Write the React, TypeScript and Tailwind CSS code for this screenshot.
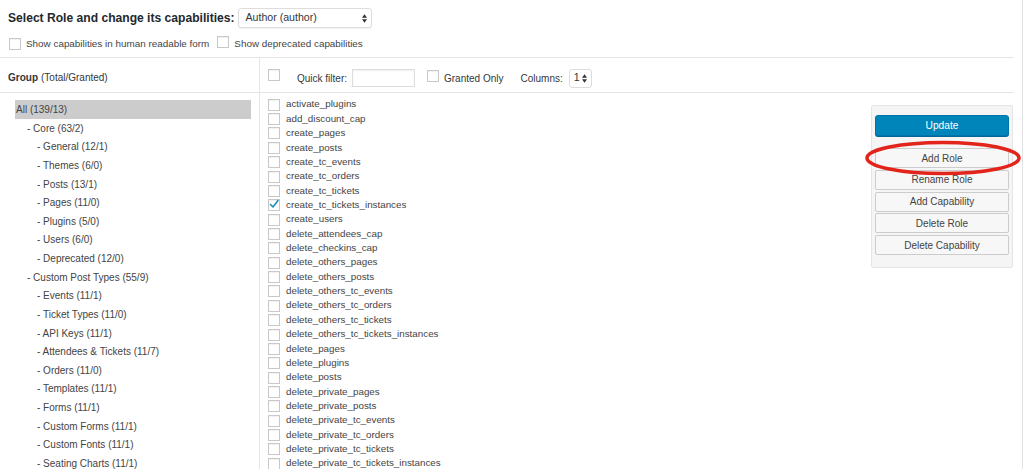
import React from 'react'

const GROUPS: { label: string; level: number; active?: boolean }[] = [
  { label: 'All (139/13)', level: 0, active: true },
  { label: '- Core (63/2)', level: 1 },
  { label: '- General (12/1)', level: 2 },
  { label: '- Themes (6/0)', level: 2 },
  { label: '- Posts (13/1)', level: 2 },
  { label: '- Pages (11/0)', level: 2 },
  { label: '- Plugins (5/0)', level: 2 },
  { label: '- Users (6/0)', level: 2 },
  { label: '- Deprecated (12/0)', level: 2 },
  { label: '- Custom Post Types (55/9)', level: 1 },
  { label: '- Events (11/1)', level: 2 },
  { label: '- Ticket Types (11/0)', level: 2 },
  { label: '- API Keys (11/1)', level: 2 },
  { label: '- Attendees & Tickets (11/7)', level: 2 },
  { label: '- Orders (11/0)', level: 2 },
  { label: '- Templates (11/1)', level: 2 },
  { label: '- Forms (11/1)', level: 2 },
  { label: '- Custom Forms (11/1)', level: 2 },
  { label: '- Custom Fonts (11/1)', level: 2 },
  { label: '- Seating Charts (11/1)', level: 2 },
]

const CAPS = [
  'activate_plugins',
  'add_discount_cap',
  'create_pages',
  'create_posts',
  'create_tc_events',
  'create_tc_orders',
  'create_tc_tickets',
  'create_tc_tickets_instances',
  'create_users',
  'delete_attendees_cap',
  'delete_checkins_cap',
  'delete_others_pages',
  'delete_others_posts',
  'delete_others_tc_events',
  'delete_others_tc_orders',
  'delete_others_tc_tickets',
  'delete_others_tc_tickets_instances',
  'delete_pages',
  'delete_plugins',
  'delete_posts',
  'delete_private_pages',
  'delete_private_posts',
  'delete_private_tc_events',
  'delete_private_tc_orders',
  'delete_private_tc_tickets',
  'delete_private_tc_tickets_instances',
]

const GRANTED = ['create_tc_tickets_instances']

function Box({ checked = false }: { checked?: boolean }) {
  return (
    <span className="relative inline-block w-[12px] h-[12px] shrink-0 border border-[#c8c8c8] bg-white shadow-[inset_0_1px_1px_rgba(0,0,0,0.06)]">
      {checked && (
        <svg viewBox="0 0 12 12" className="absolute -left-[1px] -top-[2px] w-[12px] h-[12px]">
          <path d="M2.5 6.5 L5 9 L10 2.5" fill="none" stroke="#1e8cbe" strokeWidth="1.6" strokeLinecap="round" strokeLinejoin="round" />
        </svg>
      )}
    </span>
  )
}

function Arrows() {
  return (
    <svg viewBox="0 0 6 10" className="w-[5px] h-[9px]">
      <path d="M3 0 L6 4 L0 4 Z M0 6 L6 6 L3 10 Z" fill="#333" />
    </svg>
  )
}

const BUTTONS = ['Add Role', 'Rename Role', 'Add Capability', 'Delete Role', 'Delete Capability']

export default function App() {
  return (
    <div className="relative w-[1024px] h-[469px] overflow-hidden bg-white text-[#444] font-['Liberation_Sans',Arial,sans-serif]">
      <div className="w-[1023px] h-full border-r border-[#e2e2e2]">
        {/* Role selector */}
        <div className="flex items-center h-[36px] pl-[8px]">
          <span className="text-[12.1px] font-bold text-[#23282d]">Select Role and change its capabilities:</span>
          <div className="ml-[3px] flex items-center justify-between w-[134px] h-[20px] border border-[#ddd] rounded-[3px] pl-[7px] pr-[4px] text-[10.6px] text-[#32373c] shadow-[0_1px_1px_rgba(0,0,0,0.05)]">
            <span>Author (author)</span>
            <Arrows />
          </div>
        </div>

        {/* Options */}
        <div className="flex items-center h-[16px] pl-[9px] text-[9.9px]">
          <Box />
          <span className="ml-[5px]">Show capabilities in human readable form</span>
          <span className="ml-[8px]"><Box /></span>
          <span className="ml-[5px]">Show deprecated capabilities</span>
        </div>

        {/* Table */}
        <div className="mt-[5px] w-[1014px] h-[420px] border-t border-[#e5e5e5] grid grid-cols-[260px_1fr]">
          {/* Left column */}
          <div className="border-r border-[#e5e5e5]">
            <div className="h-[35px] border-b border-[#e5e5e5] flex items-center pl-[8px] pt-[5px] text-[10px] text-[#32373c]">
              <span className="font-bold">Group</span>
              <span className="ml-[3px]">(Total/Granted)</span>
            </div>
            <div className="pt-[7.2px] pl-[15px] pr-[8px] text-[10px]">
              {GROUPS.map(g => (
                <div
                  key={g.label}
                  className={`h-[18.63px] flex items-center ${g.active ? 'bg-[#cccccc]' : ''} ${
                    g.level === 0 ? 'pl-[1px]' : g.level === 1 ? 'pl-[12px]' : 'pl-[22px]'
                  }`}
                >
                  {g.label}
                </div>
              ))}
            </div>
          </div>

          {/* Right column */}
          <div>
            <div className="h-[35px] border-b border-[#e5e5e5] flex items-center pl-[8px] pt-[6px] text-[10px] text-[#32373c]">
              <span className="-mt-[2px]"><Box /></span>
              <span className="ml-[17px]">Quick filter:</span>
              <span className="ml-[5px] w-[63px] h-[18px] border border-[#ddd] bg-white shadow-[inset_0_1px_2px_rgba(0,0,0,0.07)]" />
              <span className="ml-[12px]"><Box /></span>
              <span className="ml-[5px]">Granted Only</span>
              <span className="ml-[17px]">Columns:</span>
              <span className="ml-[6px] w-[23px] h-[19px] border border-[#ddd] rounded-[3px] flex items-center justify-between px-[4px] text-[10.6px]">
                1<Arrows />
              </span>
            </div>
            <div className="flex">
              <div className="flex-1 pt-[4.6px] pl-[8px] text-[9.8px]">
                {CAPS.map(c => (
                  <div key={c} className="h-[14.36px] flex items-center">
                    <Box checked={GRANTED.includes(c)} />
                    <span className="ml-[6px]">{c}</span>
                  </div>
                ))}
              </div>
              <div className="mt-[12px] mr-[1px] w-[142px] h-[163px] border border-[#e5e5e5] bg-[#f5f5f5] rounded-[2px] pt-[9px] px-[3px] flex flex-col">
                <div className="h-[21px] rounded-[3px] bg-[#0085ba] border border-[#0073aa] shadow-[0_1px_0_#006799] text-white text-[10.2px] flex items-center justify-center">
                  Update
                </div>
                <div className="mt-[12px] flex flex-col gap-[1.75px]">
                  {BUTTONS.map(b => (
                    <div
                      key={b}
                      className="h-[20px] rounded-[2px] border border-[#cccccc] bg-[#f7f7f7] text-[10px] text-[#444] flex items-center justify-center"
                    >
                      {b}
                    </div>
                  ))}
                </div>
              </div>
            </div>
          </div>
        </div>
      </div>

      {/* Red highlight around Add Role */}
      <svg className="absolute left-[864px] top-[140px] w-[158px] h-[36px]" viewBox="0 0 158 36">
        <ellipse cx="79" cy="18" rx="76" ry="15.5" fill="none" stroke="#e3241b" strokeWidth="3.5" />
      </svg>
    </div>
  )
}
